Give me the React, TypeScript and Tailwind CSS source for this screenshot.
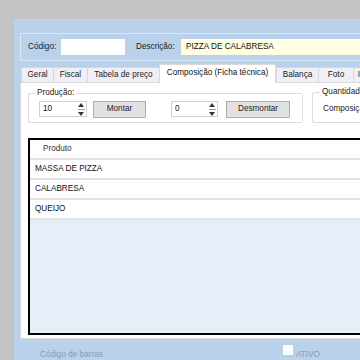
import React from "react";

const font = { fontFamily: '"Liberation Sans", Arial, sans-serif' };

function Spinner({ value, width }: { value: string; width: string }) {
  return (
    <div className={`flex h-[16px] ${width} border border-[#d0d0d0] bg-white`}>
      <div className="flex-1 pl-[3px] leading-[14px] text-[#111]">{value}</div>
      <div className="flex w-[10px] flex-col items-center justify-center gap-[2px]">
        <svg width="6" height="4" viewBox="0 0 6 4"><path d="M0 4 L3 0 L6 4 Z" fill="#333" /></svg>
        <div className="h-[1px] w-[7px] bg-[#9a9a9a]" />
        <svg width="6" height="4" viewBox="0 0 6 4"><path d="M0 0 L3 4 L6 0 Z" fill="#333" /></svg>
      </div>
    </div>
  );
}

function Btn({ label, width }: { label: string; width: string }) {
  return (
    <div className={`flex h-[17px] ${width} items-center justify-center border border-[#adadad] bg-[#e1e1e1] text-[#222]`}>
      {label}
    </div>
  );
}

export default function App() {
  const tabs: { label: string; w: string; active?: boolean }[] = [
    { label: "Geral", w: "w-[32px]" },
    { label: "Fiscal", w: "w-[34px]" },
    { label: "Tabela de preço", w: "w-[72px]" },
    { label: "Composição (Ficha técnica)", w: "w-[117px]", active: true },
    { label: "Balança", w: "w-[42px]" },
    { label: "Foto", w: "w-[35px]" },
    { label: "Imagens", w: "w-[40px]" },
  ];
  const rows = ["MASSA DE PIZZA", "CALABRESA", "QUEIJO"];
  return (
    <div
      className="flex h-[360px] w-[360px] overflow-hidden bg-[#c3c3c3] pl-[14px] pt-[19px] text-[8.2px]"
      style={font}
    >
      <div className="flex w-[420px] shrink-0 flex-col bg-[#b9d1ea] pl-[6px] pt-[14px]">
        {/* header */}
        <div className="flex h-[29px] w-[400px] items-center border border-[#dbe7f4] pl-[7px] text-[#222]">
          <div className="w-[33px]">Código:</div>
          <div className="h-[16px] w-[64px] bg-white" />
          <div className="ml-[11px] w-[45px]">Descrição:</div>
          <div className="flex h-[16px] w-[220px] items-center bg-[#fffee3] pl-[5px] text-[#111]">
            PIZZA DE CALABRESA
          </div>
        </div>
        {/* tabs */}
        <div className="mt-[3px] flex h-[18px] items-end pl-[1px]">
          {tabs.map((t) =>
            t.active ? (
              <div
                key={t.label}
                className={`${t.w} relative z-10 -mb-[1px] flex h-[19px] shrink-0 items-start justify-center border border-b-0 border-[#d9d9d9] bg-white pt-[2px] text-[#111]`}
              >
                {t.label}
              </div>
            ) : (
              <div
                key={t.label}
                className={`${t.w} flex h-[15px] shrink-0 items-center justify-center border border-r-0 border-b-0 border-[#d6d6dc] bg-[#f0eff6] text-[#222]`}
              >
                {t.label}
              </div>
            )
          )}
        </div>
        {/* content */}
        <div className="flex h-[268px] w-[400px] flex-col border border-[#d9d9d9] bg-white pl-[7px] pt-[10px]">
          <div className="flex gap-[9px]">
            <div className="relative flex h-[30px] w-[275px] shrink-0 items-center rounded-[2px] border border-[#dcdcdc] pl-[10px] pt-[3px]">
              <div className="absolute -top-[6px] left-[6px] bg-white px-[2px] leading-[10px] text-[#222]">Produção:</div>
              <Spinner value="10" width="w-[48px]" />
              <div className="ml-[6px]">
                <Btn label="Montar" width="w-[53px]" />
              </div>
              <div className="ml-[25px]">
                <Spinner value="0" width="w-[47px]" />
              </div>
              <div className="ml-[8px]">
                <Btn label="Desmontar" width="w-[64px]" />
              </div>
            </div>
            <div className="relative -mt-[1px] flex h-[31px] w-[120px] shrink-0 items-center rounded-[2px] border border-[#dcdcdc] pl-[10px] pt-[3px]">
              <div className="absolute -top-[6px] left-[7px] bg-white px-[2px] leading-[10px] text-[#222]">Quantidade</div>
              <div className="text-[#222]">Composição</div>
            </div>
          </div>
          {/* grid */}
          <div className="mt-[15px] flex h-[197px] w-[400px] flex-col border-2 border-black bg-[#e6eef8]">
            <div className="flex h-[20px] shrink-0 items-center border-b-2 border-[#e3e3e3] bg-white pl-[13px] text-[#333]">
              Produto
            </div>
            {rows.map((r) => (
              <div
                key={r}
                className="flex h-[20px] shrink-0 items-center border-b-2 border-[#e3e3e3] bg-white pl-[5px] text-[#111]"
              >
                {r}
              </div>
            ))}
          </div>
        </div>
        {/* bottom */}
        <div className="mt-[6px] flex items-start pl-[20px] text-[#8a9ab0]">
          <div className="w-[243px] pt-[5px] leading-[10px]">Código de barras</div>
          <div className="h-[10px] w-[10px] bg-white" />
          <div className="ml-[3px] pt-[5px] leading-[10px]">ATIVO</div>
        </div>
      </div>
    </div>
  );
}
